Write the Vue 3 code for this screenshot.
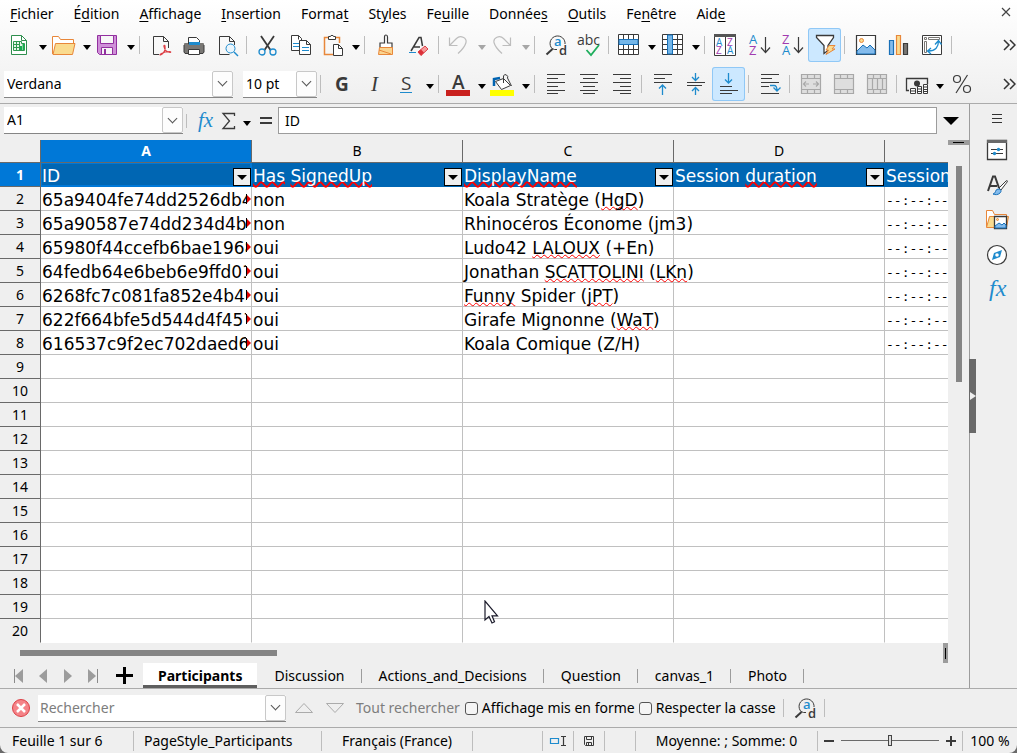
<script setup>
import { ref } from 'vue'

const menus = [
  ['', 'F', 'ichier'], ['É', 'd', 'ition'], ['', 'A', 'ffichage'], ['', 'I', 'nsertion'],
  ['Forma', 't', ''], ['St', 'y', 'les'], ['Fe', 'u', 'ille'], ['Donnée', 's', ''],
  ['', 'O', 'utils'], ['Fe', 'n', 'être'], ['Aid', 'e', '']
]

const standardBar = [
  { icon: 'new', label: 'Nouveau', split: true },
  { icon: 'open', label: 'Ouvrir', split: true },
  { icon: 'save', label: 'Enregistrer', split: true },
  { sep: true },
  { icon: 'pdf', label: 'Exporter au format PDF' },
  { icon: 'print', label: 'Imprimer' },
  { icon: 'preview', label: 'Aperçu' },
  { sep: true },
  { icon: 'cut', label: 'Couper' },
  { icon: 'copy', label: 'Copier' },
  { icon: 'paste', label: 'Coller', split: true },
  { sep: true },
  { icon: 'brush', label: 'Cloner le formatage' },
  { icon: 'clear', label: 'Effacer le formatage' },
  { sep: true },
  { icon: 'undo', label: 'Annuler', split: true, off: true },
  { icon: 'redo', label: 'Rétablir', split: true, off: true },
  { sep: true },
  { icon: 'find', label: 'Rechercher et remplacer' },
  { icon: 'spell', label: 'Orthographe' },
  { sep: true },
  { icon: 'rows', label: 'Ligne', split: true },
  { icon: 'cols', label: 'Colonne', split: true },
  { sep: true },
  { icon: 'sort', label: 'Trier' },
  { icon: 'az', label: 'Tri croissant' },
  { icon: 'za', label: 'Tri décroissant' },
  { icon: 'filter', label: 'AutoFiltre', on: true },
  { sep: true },
  { icon: 'image', label: 'Insérer une image' },
  { icon: 'chart', label: 'Insérer un diagramme' },
  { icon: 'pivot', label: 'Table dynamique' },
  { sep: true }
]

const formatBar = [
  { sep: true },
  { icon: 'bold', label: 'Gras' },
  { icon: 'italic', label: 'Italique' },
  { icon: 'underline', label: 'Souligner', split: true },
  { sep: true },
  { icon: 'fontcolor', label: 'Couleur de police', split: true },
  { icon: 'fill', label: "Couleur d'arrière-plan", split: true },
  { sep: true },
  { icon: 'left', label: 'Aligner à gauche' },
  { icon: 'center', label: 'Centrer' },
  { icon: 'right', label: 'Aligner à droite' },
  { sep: true },
  { icon: 'top', label: 'Aligner en haut' },
  { icon: 'middle', label: 'Centrer verticalement' },
  { icon: 'bottom', label: 'Aligner en bas', on: true },
  { sep: true },
  { icon: 'wrap', label: 'Renvoi à la ligne' },
  { sep: true },
  { icon: 'merge', label: 'Fusionner et centrer', off: true },
  { icon: 'mergecells', label: 'Fusionner', off: true },
  { icon: 'split', label: 'Scinder', off: true },
  { sep: true },
  { icon: 'currency', label: 'Format monétaire', split: true },
  { icon: 'percent', label: 'Format pourcentage' }
]

const columns = ['A', 'B', 'C', 'D', '']
const fields = ['ID', '~Has~ ~SignedUp~', '~DisplayName~', 'Session ~duration~', 'Session']
const people = [
  ['65a9404fe74dd2526db4', 'non', 'Koala Stratège (~HgD~)'],
  ['65a90587e74dd234d4b1', 'non', 'Rhinocéros Économe (jm3)'],
  ['65980f44ccefb6bae1968', 'oui', 'Ludo42 ~LALOUX~ (+En)'],
  ['64fedb64e6beb6e9ffd01', 'oui', 'Jonathan ~SCATTOLINI~ (~LKn~)'],
  ['6268fc7c081fa852e4b43', 'oui', '~Funny~ Spider (~jPT~)'],
  ['622f664bfe5d544d4f457', 'oui', 'Girafe Mignonne (~WaT~)'],
  ['616537c9f2ec702daed6', 'oui', 'Koala Comique (Z/H)']
]
const emptyRows = Array.from({ length: 12 }, (_, i) => i + 9)
const pieces = (text) => text.split('~')

const sheets = ['Participants', 'Discussion', 'Actions_and_Decisions', 'Question', 'canvas_1', 'Photo']
const panels = [
  { icon: 'properties', label: 'Propriétés' },
  { icon: 'styles', label: 'Styles' },
  { icon: 'gallery', label: 'Galerie' },
  { icon: 'navigator', label: 'Navigateur' },
  { icon: 'functions', label: 'Fonctions' }
]

const content = ref('ID')
const search = ref('')
const zoom = ref(50)
</script>

<template>
  <svg class="defs" width="0" height="0" aria-hidden="true">
    <defs>
      <symbol id="i-new" viewBox="0 0 24 24">
        <path d="M3.500 2.500h10l5 5v14h-15z" fill="#fff" stroke="#2f8f4e" /><path d="M13.500 2.500v5h5" fill="none" stroke="#2f8f4e" />
        <path d="M5.500 8.500h8v2h3v7h-11zM5.500 11.500h6M5.500 14.500h6M8.500 8.500v9M11.500 8.500v9" fill="#e6f5ea" stroke="#2f9a50" /><path d="M12 17v-4h2v4zM14.500 17v-6h2v6z" fill="#18ab50" />
      </symbol>
      <symbol id="i-open" viewBox="0 0 24 24">
        <path d="M.500 21V3.500h6l2 3h13v4" fill="#fff" stroke="#e8873a" /><path d="M1 21.500l2.500-11h19.500l-2.500 11z" fill="#fadb8f" stroke="#e8873a" />
      </symbol>
      <symbol id="i-save" viewBox="0 0 24 24">
        <path d="M1.500 2.500h19v19h-17l-2-2z" fill="#cf90d8" stroke="#92309f" /><path d="M4.500 2.500h13v8h-13z" fill="#f7f7f7" stroke="#92309f" /><path d="M5.500 21.500v-7h11v7z" fill="#f7f7f7" stroke="#92309f" /><path d="M8 16h2v5H8z" fill="#92309f" />
      </symbol>
      <symbol id="i-pdf" viewBox="0 0 24 24">
        <path d="M11 21.500H5.500v-18h10l5 5V15M15.500 3.500v5h5" fill="none" stroke="#3a3a3a" />
        <path d="M12.500 22c4-2 5-6 4.500-9 0-1-1.500-1-1 .5.500 3.500 3 5.500 6 6 1 0 1-1-.5-1-3 0-6 .8-8 2-1.500 1-2 1.500-1 1.500z" fill="none" stroke="#dc3f45" stroke-width="1.200" />
      </symbol>
      <symbol id="i-print" viewBox="0 0 24 24">
        <rect x="3" y="10" width="20" height="10" rx="1" fill="#797774" /><path d="M3 12v7l1 1.500h3M23 12v7l-1 1.500h-3" fill="none" stroke="#3a3a3a" />
        <path d="M7.500 11.500v-7h8l3 3v4" fill="#fff" stroke="#3a3a3a" /><path d="M8 9h11v3H8z" fill="#1e8bcd" /><path d="M7.500 16.500h11v5h-11z" fill="#fff" stroke="#3a3a3a" />
      </symbol>
      <symbol id="i-preview" viewBox="0 0 24 24">
        <path d="M20.500 12V8.500l-5-5h-10v18h10M15.500 3.500v5h5" fill="none" stroke="#3a3a3a" /><circle cx="16.500" cy="15.500" r="4.500" fill="#eaf5fc" stroke="#1e8bcd" /><path d="M20 19l4 4" stroke="#1e8bcd" stroke-width="1.500" />
      </symbol>
      <symbol id="i-cut" viewBox="0 0 24 24">
        <path d="M6 3l9.500 14M19 3L9.500 17" stroke="#3a3a3a" stroke-width="1.800" fill="none" /><circle cx="7" cy="19" r="3" fill="none" stroke="#1e8bcd" stroke-width="1.300" /><circle cx="18" cy="19" r="3" fill="none" stroke="#1e8bcd" stroke-width="1.300" />
      </symbol>
      <symbol id="i-copy" viewBox="0 0 24 24">
        <path d="M3.500 2.500h7l3 3v12h-10zM10.500 2.500v4" fill="#fff" stroke="#3a3a3a" /><path d="M5 10.500h6M5 13.500h6" stroke="#1e8bcd" />
        <path d="M11.500 7.500h7l4 4v10h-11zM18.500 7.500v4h4" fill="#fff" stroke="#3a3a3a" /><path d="M14 14.500h7M14 17.500h7" stroke="#1e8bcd" />
      </symbol>
      <symbol id="i-paste" viewBox="0 0 24 24">
        <path d="M8 4.500H3.500v17H12M15 4.500h3.500V10" fill="none" stroke="#e8873a" stroke-width="1.500" /><path d="M7.500 6.500v-3h2l.5-1h2l.5 1h2v3z" fill="#fff" stroke="#3a3a3a" /><path d="M12.500 11.500h5l4 4v7h-9zM17.500 11.500v4h4" fill="#fff" stroke="#3a3a3a" />
      </symbol>
      <symbol id="i-brush" viewBox="0 0 24 24">
        <path d="M11.500 10V4q0-2 1.500-2t1.500 2v6h4.500v4.500H7V10z" fill="#fff" stroke="#3a3a3a" stroke-width="1.200" /><path d="M6.500 14.500h13v7h-14z" fill="#fad490" stroke="#e8873a" /><path d="M6 17l12 4" stroke="#e8873a" />
      </symbol>
      <symbol id="i-clear" viewBox="0 0 24 24">
        <path d="M5 18L13 4.500h2L16.500 13M8 14h6" fill="none" stroke="#3a3a3a" stroke-width="1.500" /><path d="M3 19.500h7" stroke="#1e8bcd" />
        <path d="M12 19l7-6 3 3-7 6.500z" fill="#f79a9a" stroke="#dc3f45" /><path d="M12 19l3-2.500 3 3-3 3z" fill="#dc3038" />
      </symbol>
      <symbol id="i-undo" viewBox="0 0 24 24"><path d="M2.500 4.500v8h8M3 12l6.500-6.500c4-4 10.500-.5 9.500 4C18 13.500 15 17 11 20.500" fill="none" stroke="#bdbdbd" stroke-width="1.200" /></symbol>
      <symbol id="i-redo" viewBox="0 0 24 24"><path d="M19.500 4.500v8h-8M19 12l-6.500-6.500c-4-4-10.500-.5-9.500 4C4 13.500 7 17 11 20.500" fill="none" stroke="#bdbdbd" stroke-width="1.200" /></symbol>
      <symbol id="i-find" viewBox="0 0 24 24">
        <path d="M9 15.500A7.500 7.500 0 1 1 22 9.500V11" fill="none" stroke="#3a3a3a" /><path d="M3.500 21.500l6-5.500" stroke="#3a3a3a" stroke-width="2" /><path d="M9 15.500q2.500 1.500 5 1" fill="none" stroke="#3a3a3a" />
        <text x="11" y="13" class="glyph m" font-size="13" fill="#1e8bcd">a</text><text x="16" y="22" class="glyph m" font-size="13" fill="#3a3a3a">d</text>
      </symbol>
      <symbol id="i-spell" viewBox="0 0 24 24">
        <text x="1" y="12" class="glyph" font-size="14" fill="#3a3a3a">abc</text><path d="M10.500 17l4.500 5 8-10" fill="none" stroke="#1fae5d" stroke-width="1.800" />
      </symbol>
      <symbol id="i-rows" viewBox="0 0 24 24">
        <path d="M1.500 1.500h20v20h-20zM6.500 1.500v20M11.500 1.500v20M16.500 1.500v20M1.500 16.500h20" fill="#fff" stroke="#3a3a3a" /><path d="M2 6.500h19v5H2z" fill="#74b6e8" stroke="#1870b8" />
      </symbol>
      <symbol id="i-cols" viewBox="0 0 24 24">
        <path d="M1.500 1.500h20v20h-20zM1.500 6.500h20M1.500 11.500h20M1.500 16.500h20M16.500 1.500v20" fill="#fff" stroke="#3a3a3a" /><path d="M6.500 2v19h5V2z" fill="#74b6e8" stroke="#1870b8" />
      </symbol>
      <symbol id="i-sort" viewBox="0 0 24 24">
        <path d="M1.500 2.500h21v20h-21zM12.500 3v19" fill="#fff" stroke="#3a3a3a" /><path d="M1 1h22v3H1z" fill="#555" />
        <g class="glyph" font-size="10"><text x="3" y="13" fill="#1e8bcd">A</text><text x="14" y="13" fill="#a23bb0">Z</text><text x="3" y="21" fill="#a23bb0">Z</text><text x="14" y="21" fill="#1e8bcd">A</text></g>
      </symbol>
      <symbol id="i-az" viewBox="0 0 24 24">
        <g class="glyph" font-size="13"><text x="3" y="11" fill="#1e8bcd">A</text><text x="3" y="22" fill="#a23bb0">Z</text></g><path d="M19.500 4v15M15 14.500l4.500 5 4.500-5" fill="none" stroke="#3a3a3a" stroke-width="1.200" />
      </symbol>
      <symbol id="i-za" viewBox="0 0 24 24">
        <g class="glyph" font-size="13"><text x="3" y="11" fill="#a23bb0">Z</text><text x="3" y="22" fill="#1e8bcd">A</text></g><path d="M19.500 4v15M15 14.500l4.500 5 4.500-5" fill="none" stroke="#3a3a3a" stroke-width="1.200" />
      </symbol>
      <symbol id="i-filter" viewBox="0 0 24 24">
        <path d="M4.500 2.500h17v2l-5.500 8v5l-4 3v-8l-7.500-8z" fill="#fff" stroke="#3a3a3a" stroke-width="1.300" /><path d="M17 12.500h6l-3 3.500h3l-9 5.500 2.500-4.500h-2.500z" fill="#fadb8f" stroke="#e8873a" />
      </symbol>
      <symbol id="i-image" viewBox="0 0 24 24">
        <path d="M3.500 2.500h19v19h-19z" fill="#fff" stroke="#3a3a3a" stroke-width="1.200" /><circle cx="8.500" cy="7.500" r="2" fill="#fadb8f" stroke="#e8873a" /><path d="M4 21v-3l6-6 4 3 3-3 5 5v4z" fill="#83bbec" stroke="#1870b8" />
      </symbol>
      <symbol id="i-chart" viewBox="0 0 24 24">
        <path d="M3.500 7.500h4v14h-4z" fill="#83bbec" stroke="#1870b8" stroke-width="1.200" /><path d="M10.500 2.500h4v19h-4z" fill="#fadb8f" stroke="#e8873a" stroke-width="1.200" /><path d="M17.500 10.500h4v11h-4z" fill="#797774" stroke="#3a3a3a" stroke-width="1.200" />
      </symbol>
      <symbol id="i-pivot" viewBox="0 0 24 24">
        <path d="M3.500 2.500h19v19h-19z" fill="#fff" stroke="#3a3a3a" /><path d="M5.500 4.500h2v2h-2zM9.500 4.500h11v2h-11zM5.500 8.500h2v11h-2z" fill="#fff" stroke="#797774" /><path d="M19.500 8c0 6-3 10-10 10M16 11.500l3.500-4 3 4M12 15l-3.500 3 3.500 3" fill="none" stroke="#1e8bcd" stroke-width="1.300" />
      </symbol>
      <symbol id="i-bold" viewBox="0 0 24 24"><text x="6" y="19" class="glyph b" font-size="19" fill="#3a3a3a">G</text></symbol>
      <symbol id="i-italic" viewBox="0 0 24 24"><text x="9" y="19" class="serif" font-size="21" fill="#3a3a3a">I</text></symbol>
      <symbol id="i-underline" viewBox="0 0 24 24"><text x="6" y="18" class="glyph" font-size="19" fill="#3a3a3a">S</text><path d="M5 20.500h12" stroke="#1e8bcd" /></symbol>
      <symbol id="i-fontcolor" viewBox="0 0 24 24"><text x="5" y="17" class="glyph m" font-size="19" fill="#3a3a3a">A</text><path d="M-1 18h24v6H-1z" fill="#c9211e" /></symbol>
      <symbol id="i-fill" viewBox="0 0 24 24">
        <path d="M3 14V7l6-1" fill="none" stroke="#0063b1" stroke-width="2.500" /><path d="M4.500 9.500l8-3 7 7-9 4z" fill="#fff" stroke="#3a3a3a" /><path d="M12.500 11V4q1-2.500 3-1t1 3l4 8" fill="none" stroke="#3a3a3a" /><path d="M-1 18h24v6H-1z" fill="#ff0" />
      </symbol>
      <symbol id="i-left" viewBox="0 0 24 24"><path d="M4 2.500h18M4 6.500h11M4 10.500h18M4 14.500h11M4 18.500h18M4 21.500h11" class="ink" /></symbol>
      <symbol id="i-center" viewBox="0 0 24 24"><path d="M4 2.500h18M7 6.500h12M4 10.500h18M7 14.500h12M4 18.500h18M7 21.500h12" class="ink" /></symbol>
      <symbol id="i-right" viewBox="0 0 24 24"><path d="M4 2.500h18M11 6.500h11M4 10.500h18M11 14.500h11M4 18.500h18M11 21.500h11" class="ink" /></symbol>
      <symbol id="i-top" viewBox="0 0 24 24"><path d="M4 2.500h18M4 6.500h11M4 10.500h18" class="ink" /><path d="M12.500 23V13M9 16.500l3.500-3.500 3.500 3.500" class="blue" /></symbol>
      <symbol id="i-middle" viewBox="0 0 24 24"><path d="M4 10.500h18M4 13.500h15" class="ink" /><path d="M12.500 1v7M9 5l3.500 3.500L16 5M12.500 23v-7M9 19l3.500-3.500L16 19" class="blue" /></symbol>
      <symbol id="i-bottom" viewBox="0 0 24 24"><path d="M4 14.500h12M4 18.500h18M4 21.500h12" class="ink" /><path d="M12.500 1v10M9 7.500l3.500 3.500L16 7.500" class="blue" /></symbol>
      <symbol id="i-wrap" viewBox="0 0 24 24"><path d="M4 2.500h18M4 6.500h11M4 10.500h18M4 14.500h8M4 21.500h18" class="ink" /><path d="M13 13.500h4q3 0 3 5M16.500 15.500l3.500 3.500 3.500-3.500" class="blue" /></symbol>
      <symbol id="i-merge" viewBox="0 0 24 24"><path d="M3.500 2.500h19v19h-19zM3.500 6.500h19M3.500 17.500h19M9.500 2.500v4M16.500 2.500v4M9.500 17.500v4M16.500 17.500v4M5 12h6M15 12h6M8 9.500L5.500 12 8 14.500M18 9.500l2.500 2.500-2.500 2.500" class="faded" /></symbol>
      <symbol id="i-mergecells" viewBox="0 0 24 24"><path d="M3.500 2.500h19v19h-19zM3.500 6.500h19M3.500 17.500h19M9.500 2.500v4M16.500 2.500v4M9.500 17.500v4M16.500 17.500v4" class="faded" /></symbol>
      <symbol id="i-split" viewBox="0 0 24 24"><path d="M3.500 2.500h19v19h-19zM3.500 6.500h19M3.500 17.500h19M9.500 2.500v4M16.500 2.500v4M8.500 6.500v11M13.500 6.500v11M18.500 6.500v11M9.500 17.500v4M16.500 17.500v4" class="faded" /></symbol>
      <symbol id="i-currency" viewBox="0 0 24 24">
        <path d="M4 18.500H1.500v-12h21V12M1 6.500h22" fill="none" stroke="#3a3a3a" stroke-width="1.300" /><circle cx="12" cy="11.500" r="3" fill="#3a3a3a" />
        <path d="M5.500 16.500h5v5h-5zM12.500 14.500h4v7h-4zM18.500 12.500h4v9h-4zM5 19h6M12 17h5M12 19.500h5M18 15h5M18 17.500h5M18 19.500h5" fill="#fff" stroke="#3a3a3a" />
      </symbol>
      <symbol id="i-percent" viewBox="0 0 24 24"><circle cx="8" cy="7" r="3.500" class="ink" /><circle cx="18" cy="17" r="3.500" class="ink" /><path d="M18.500 3L7 21" class="ink" /></symbol>
      <symbol id="i-properties" viewBox="0 0 24 24"><path d="M2.500 2.500h19v19h-19z" fill="#fff" stroke="#3a3a3a" stroke-width="1.300" /><path d="M2 2h20v3H2z" fill="#696969" /><path d="M6 11.500h12M6 15.500h12" stroke="#3a3a3a" /><circle cx="13.500" cy="11.500" r="1.700" fill="#1e8bcd" /><circle cx="9.500" cy="15.500" r="1.700" fill="#1e8bcd" /></symbol>
      <symbol id="i-styles" viewBox="0 0 24 24">
        <path d="M3 18L8 3.500h2L14 15M5 13h7" fill="none" stroke="#3a3a3a" stroke-width="2" /><path d="M14 15l7-7q1.500-1 1.500.500L16 17z" fill="#fff" stroke="#3a3a3a" /><path d="M8 21c3 0 2-5 5-5s4 2 2 4-5 2-7 1z" fill="#83bbec" stroke="#1870b8" />
      </symbol>
      <symbol id="i-gallery" viewBox="0 0 24 24">
        <path d="M1.500 19V2.500h6l2 4h12v2" fill="#fff" stroke="#e8873a" /><path d="M1.500 19.500l3-11h19l-2 11z" fill="#fadb8f" stroke="#e8873a" /><path d="M9.500 8.500h12v12h-12z" fill="#fff" stroke="#3a3a3a" stroke-width="1.300" /><circle cx="12.500" cy="11.500" r="1" fill="#fadb8f" stroke="#e8873a" /><path d="M10 20v-2l4-3 3 2 2-2 2 2v3z" fill="#83bbec" stroke="#1870b8" />
      </symbol>
      <symbol id="i-navigator" viewBox="0 0 24 24"><circle cx="12" cy="12" r="9.500" fill="#fff" stroke="#3a3a3a" stroke-width="1.200" /><path d="M17 7l-2 7-8 3 2-7z" fill="#1e8bcd" /><circle cx="12" cy="12" r="1.800" fill="#fff" /></symbol>
      <symbol id="i-functions" viewBox="0 0 24 24"><text x="4" y="18" class="serif" font-size="24" fill="#1e8bcd">fx</text></symbol>
    </defs>
  </svg>

  <div class="app">
    <header class="chrome">
      <nav class="menu">
        <button v-for="m in menus" :key="m.join('')" class="menu-item">{{ m[0] }}<u>{{ m[1] }}</u>{{ m[2] }}</button>
        <button class="close" aria-label="Fermer le document">
          <svg width="10" height="10" viewBox="0 0 10 10"><path d="M1 1l8 8M9 1L1 9" stroke="#444" stroke-width="1.200" /></svg>
        </button>
      </nav>
      <div class="toolbar">
        <template v-for="(t, i) in standardBar" :key="i">
          <span v-if="t.sep" class="sep"></span>
          <template v-else>
            <button class="tool" :class="{ on: t.on }" :aria-label="t.label"><svg class="icon"><use :href="'#i-' + t.icon" /></svg></button>
            <button v-if="t.split" class="drop" :class="{ off: t.off }" :aria-label="t.label + ' : options'"></button>
          </template>
        </template>
        <button class="more" aria-label="Plus de commandes"><svg width="14" height="12" viewBox="0 0 14 12"><path d="M2 1l5 5-5 5M8 1l5 5-5 5" fill="none" stroke="#333" stroke-width="1.500" /></svg></button>
      </div>
      <div class="toolbar">
        <span class="combo font-name">
          <select aria-label="Nom de police"><option>Verdana</option></select>
          <span class="chev"></span>
        </span>
        <span class="combo font-size">
          <select aria-label="Taille de police"><option>10 pt</option></select>
          <span class="chev"></span>
        </span>
        <template v-for="(t, i) in formatBar" :key="i">
          <span v-if="t.sep" class="sep"></span>
          <template v-else>
            <button class="tool" :class="{ on: t.on }" :aria-label="t.label"><svg class="icon"><use :href="'#i-' + t.icon" /></svg></button>
            <button v-if="t.split" class="drop" :class="{ off: t.off }" :aria-label="t.label + ' : options'"></button>
          </template>
        </template>
        <button class="more" aria-label="Plus de commandes"><svg width="14" height="12" viewBox="0 0 14 12"><path d="M2 1l5 5-5 5M8 1l5 5-5 5" fill="none" stroke="#333" stroke-width="1.500" /></svg></button>
      </div>
    </header>

    <div class="workspace">
      <main class="document">
        <div class="formula">
          <span class="combo name-box">
            <select aria-label="Zone de nom"><option>A1</option></select>
            <span class="chev"></span>
          </span>
          <span class="sep"></span>
          <button class="fx" aria-label="Assistant Fonctions"><svg width="24" height="24" viewBox="0 0 24 24"><text x="5" y="18" class="serif" font-size="21" fill="#1e8bcd">fx</text></svg></button>
          <button class="sigma" aria-label="Somme"><svg width="16" height="20" viewBox="0 0 16 20"><path d="M13.500 5V2.500H2L8.500 10 2 17.500h11.500V15" fill="none" stroke="#3a3a3a" stroke-width="1.300" /></svg></button>
          <button class="drop" aria-label="Choisir la fonction"></button>
          <button class="equal" aria-label="Formule"><svg width="14" height="10" viewBox="0 0 14 10"><path d="M1 2h12M1 7h12" stroke="#3a3a3a" stroke-width="2" /></svg></button>
          <input v-model="content" class="content" aria-label="Ligne de saisie" />
          <button class="expand" aria-label="Développer la barre de formule"></button>
        </div>

        <div class="sheet-area">
          <div class="sheet">
            <table>
              <colgroup><col class="c-num" /><col v-for="n in 4" :key="n" class="c-data" /><col /></colgroup>
              <thead>
                <tr>
                  <td class="corner"></td>
                  <th v-for="(c, i) in columns" :key="i" scope="col" :class="{ sel: i === 0 }">{{ c }}</th>
                </tr>
              </thead>
              <tbody>
                <tr class="fields">
                  <th scope="row" class="sel">1</th>
                  <td v-for="(f, i) in fields" :key="f" :class="{ cursor: i === 0 }">
                    <div class="field">
                      <span><span v-for="(p, k) in pieces(f)" :key="k" :class="{ typo: k % 2 }">{{ p }}</span></span>
                      <button v-if="i < 4" class="autofilter" :aria-label="'Filtrer la colonne ' + columns[i]"></button>
                    </div>
                  </td>
                </tr>
                <tr v-for="(p, r) in people" :key="p[0]">
                  <th scope="row">{{ r + 2 }}</th>
                  <td class="id"><div class="clipped"><span class="long">{{ p[0] }}</span><svg class="overflow-mark" width="5" height="10" viewBox="0 0 5 10"><path d="M.500 0v10" stroke="#000" /><path d="M1 1v8l4-4z" fill="#e00000" /></svg></div></td>
                  <td>{{ p[1] }}</td>
                  <td><span v-for="(s, k) in pieces(p[2])" :key="k" :class="{ typo: k % 2 }">{{ s }}</span></td>
                  <td></td>
                  <td class="time">--:--:--</td>
                </tr>
                <tr v-for="n in emptyRows" :key="n">
                  <th scope="row">{{ n }}</th>
                  <td v-for="c in 5" :key="c"></td>
                </tr>
              </tbody>
            </table>
          </div>
          <div class="vscroll"><div class="vsplit"></div><div class="vthumb"></div></div>
        </div>

        <div class="hscroll"><div class="hthumb"></div><div class="hsplit"></div></div>

        <div class="tabs">
          <button class="nav" aria-label="Première feuille"><svg width="16" height="16" viewBox="0 0 16 16"><path d="M3.500 1v14" stroke="#8a8a8a" /><path d="M12 1v14L4 8z" fill="#9c9c9c" /></svg></button>
          <button class="nav" aria-label="Feuille précédente"><svg width="16" height="16" viewBox="0 0 16 16"><path d="M11 1v14L3 8z" fill="#9c9c9c" /></svg></button>
          <button class="nav" aria-label="Feuille suivante"><svg width="16" height="16" viewBox="0 0 16 16"><path d="M3 1v14l8-7z" fill="#9c9c9c" /></svg></button>
          <button class="nav" aria-label="Dernière feuille"><svg width="16" height="16" viewBox="0 0 16 16"><path d="M11.500 1v14" stroke="#8a8a8a" /><path d="M2 1v14l8-7z" fill="#9c9c9c" /></svg></button>
          <button class="add" aria-label="Ajouter une feuille"><svg width="18" height="18" viewBox="0 0 18 18"><path d="M0 8.500h17M8.500 0v17" stroke="#000" stroke-width="3" /></svg></button>
          <button v-for="(s, i) in sheets" :key="s" class="tab" :class="{ active: i === 0 }">{{ s }}</button>
        </div>
      </main>

      <aside class="sidebar">
        <button class="panel-btn burger" aria-label="Paramètres du volet"><svg width="12" height="10" viewBox="0 0 12 10"><path d="M1 1.500h10M1 5.500h10M1 9.500h10" stroke="#333" /></svg></button>
        <button v-for="p in panels" :key="p.icon" class="panel-btn" :aria-label="p.label"><svg class="icon"><use :href="'#i-' + p.icon" /></svg></button>
        <button class="handle" aria-label="Afficher le volet latéral"><svg width="6" height="8" viewBox="0 0 6 8"><path d="M0 0v8l6-4z" fill="#efefef" /></svg></button>
      </aside>
    </div>

    <div class="findbar">
      <button class="stop" aria-label="Fermer la barre de recherche"><svg width="20" height="20" viewBox="0 0 20 20"><circle cx="10" cy="10" r="8.500" fill="#f48388" stroke="#dc3f45" /><path d="M6 6l8 8M14 6l-8 8" stroke="#fff" stroke-width="2.500" /></svg></button>
      <span class="combo search">
        <input v-model="search" type="text" placeholder="Rechercher" aria-label="Rechercher" />
        <button class="chev" aria-label="Historique"></button>
      </span>
      <button class="step" aria-label="Rechercher le précédent"><svg width="20" height="12" viewBox="0 0 20 12"><path d="M1.500 10.500h17L10 1.500z" fill="none" stroke="#ababab" /></svg></button>
      <button class="step" aria-label="Rechercher le suivant"><svg width="20" height="12" viewBox="0 0 20 12"><path d="M1.500 1.500h17L10 10.500z" fill="none" stroke="#ababab" /></svg></button>
      <button class="find-all" disabled>Tout rechercher</button>
      <label class="check"><input type="checkbox" />Affichage mis en forme</label>
      <label class="check"><input type="checkbox" />Respecter la casse</label>
      <span class="sep"></span>
      <button class="tool" aria-label="Rechercher et remplacer"><svg class="icon"><use href="#i-find" /></svg></button>
      <span class="sep"></span>
    </div>

    <footer class="status">
      <span class="cell page">Feuille 1 sur 6</span>
      <span class="cell style">PageStyle_Participants</span>
      <span class="cell lang">Français (France)</span>
      <span class="cell blank"></span>
      <span class="cell small"><svg width="18" height="14" viewBox="0 0 18 14"><path d="M1.500 4.500h8v5h-8z" fill="none" stroke="#1e8bcd" stroke-width="1.200" /><path d="M12 2.500h5M12 11.500h5M14.500 2.500v9" stroke="#3a3a3a" stroke-width="1.200" /></svg></span>
      <span class="cell small"><svg width="12" height="12" viewBox="0 0 12 12"><path d="M1.500 1.500h9v9h-8l-1-1zM3.500 1.500v3h5v-3M3.500 10.500v-3h5v3M5.500 8v2" fill="none" stroke="#3a3a3a" /></svg></span>
      <span class="cell small"></span>
      <span class="cell sum">Moyenne: ; Somme: 0</span>
      <span class="cell zoom">
        <button aria-label="Zoom arrière"><svg width="12" height="12" viewBox="0 0 12 12"><path d="M1 6h10" stroke="#3a3a3a" stroke-width="2" /></svg></button>
        <input v-model="zoom" type="range" min="0" max="100" aria-label="Facteur de zoom" />
        <button aria-label="Zoom avant"><svg width="12" height="12" viewBox="0 0 12 12"><path d="M1 6h10M6 1v10" stroke="#3a3a3a" stroke-width="2" /></svg></button>
      </span>
      <span class="cell percent">100 %</span>
    </footer>

    <svg class="pointer" width="16" height="25" viewBox="0 0 16 25" aria-hidden="true"><path d="M1 1v19l4-3.500 3 6.500 2.500-1.200-2.500-6h5.500z" fill="#fff" stroke="#1b1b2b" stroke-width="1.200" /></svg>
  </div>
</template>

<style>
html { background: #6a6a6a; }
body { margin: 0; }
</style>

<style scoped>
.defs { position: absolute; }
.glyph { font-family: "Open Sans", "Noto Sans", sans-serif; }
.b { font-weight: 700; }
.m { font-weight: 600; }
.serif { font-family: "Liberation Serif", serif; font-style: italic; }
.ink { fill: none; stroke: #3a3a3a; stroke-width: 1.2; }
.blue { fill: none; stroke: #1e8bcd; stroke-width: 1.3; }
.faded { fill: #dedede; stroke: #a8a8a8; stroke-width: 1.2; }

.app {
  position: relative;
  display: flex;
  flex-direction: column;
  min-height: 100vh;
  overflow: hidden;
  border-radius: 0 0 8px 8px;
  background: #efefef;
  color: #000;
  font: 14px/20px "Noto Sans", "Open Sans", sans-serif;
}
button, select, input { font: inherit; color: inherit; }
button {
  display: flex;
  align-items: center;
  justify-content: center;
  padding: 0;
  border: 0;
  background: none;
  white-space: nowrap;
}
.icon { width: 24px; height: 24px; flex: none; overflow: visible; }
.icon use, symbol { overflow: visible; }

.chrome { background: linear-gradient(#fff, #efefef); border-bottom: 1px solid #ababab; padding-bottom: 2px; }
.menu { display: flex; height: 28px; }
.menu-item { padding: 0 10px; display: block; }
.menu-item u { text-underline-offset: 2px; }
.close { margin-left: auto; padding: 0 6px; height: 24px; }
.toolbar { display: flex; align-items: center; height: 34px; padding: 0 1px 0 4px; }
.toolbar + .toolbar { margin-top: 5px; }
.tool {
  flex: none;
  width: 33px;
  height: 34px;
  justify-content: flex-start;
  padding-left: 4px;
}
.tool.on { background: #cce8ff; box-shadow: inset 0 0 0 1px #90c8f6; border-radius: 3px; }
.drop { flex: none; width: 11px; height: 34px; }
.drop::after {
  content: "";
  border: 4px solid transparent;
  border-top: 5px solid #000;
  border-bottom: 0;
  margin-top: 5px;
}
.drop.off::after { border-top-color: #a6a6a6; }
.sep { flex: none; width: 8px; height: 18px; background: linear-gradient(90deg, transparent 3px, #bdbdbd 3px, #bdbdbd 4px, transparent 4px); }
.more { margin-left: auto; flex: none; width: 14px; }

.combo { display: grid; flex: none; height: 27px; background: #fff; border-bottom: 1px solid #858585; box-sizing: border-box; }
.combo select, .combo input {
  grid-area: 1 / 1;
  appearance: none;
  width: 100%;
  min-width: 0;
  box-sizing: border-box;
  border: 0;
  border-radius: 0;
  padding: 0 24px 0 3px;
  background: none;
  outline: 0;
}
.combo input { padding-left: 2px; }
.combo input::placeholder { color: #7d7d7d; opacity: 1; }
.chev {
  grid-area: 1 / 1;
  justify-self: end;
  width: 21px;
  box-sizing: border-box;
  border: 1px solid #c8c8c8;
  border-radius: 2px;
  background: #fdfdfd;
  display: flex;
  align-items: center;
  justify-content: center;
  pointer-events: none;
}
.chev::after {
  content: "";
  width: 6px;
  height: 6px;
  border: solid #555;
  border-width: 0 1px 1px 0;
  transform: rotate(45deg);
  margin-bottom: 4px;
}
.font-name { width: 229px; margin-right: 10px; }
.font-size { width: 74px; }

.workspace { display: flex; flex: 1; border-bottom: 1px solid #ababab; }
.document { flex: 1; min-width: 0; }
.formula { display: flex; align-items: center; height: 27px; padding: 3px 10px 6px 4px; }
.name-box { width: 179px; }
.formula .sep { width: 10px; height: 14px; }
.fx { width: 24px; justify-content: flex-start; }
.sigma { width: 23px; }
.formula .drop { width: 14px; height: 27px; }
.equal { width: 24px; }
.content {
  flex: 1;
  min-width: 0;
  height: 27px;
  box-sizing: border-box;
  border: 1px solid #9c9c9c;
  border-radius: 0;
  padding: 0 6px;
  background: #fff;
}
.expand { width: 22px; justify-content: flex-end; }
.expand::after { content: ""; border: 8px solid transparent; border-top-color: #000; border-bottom: 0; }

.sheet-area { display: flex; }
.sheet { flex: 1; min-width: 0; overflow: hidden; background: #fff; }
table { table-layout: fixed; width: 100%; border-spacing: 0; }
.c-num { width: 41px; }
.c-data { width: 211px; }
th, td { box-sizing: border-box; height: 24px; padding: 0; white-space: nowrap; }
th { background: #efefef; font-weight: 400; line-height: 23px; border-right: 1px solid #696969; border-bottom: 1px solid #696969; }
thead th, .corner { height: 23px; line-height: 22px; }
.corner { background: #efefef; border-bottom: 1px solid #696969; border-right: 1px solid #696969; }
th.sel { background: #0078d7; color: #fff; font-weight: 700; }
thead th:last-child { border-right: 0; }
tbody td {
  border-right: 1px solid #c0c0c0;
  border-bottom: 1px solid #c0c0c0;
  padding: 4px 0 0 1px;
  font-family: "DejaVu Sans", sans-serif;
  font-size: 17px;
  line-height: 19px;
}
tbody td:last-child { border-right: 0; }
tbody tr:last-child > * { border-bottom-color: transparent; }
tbody .time { font-family: "DejaVu Sans Mono", monospace; font-size: 13px; }
.fields td { background: #0066b3; color: #fff; border-color: #0066b3; }
.fields td, .id { padding-top: 0; }
.fields .cursor { box-shadow: inset 0 0 0 1px #0078d7; border-color: #0078d7; }
.field { display: flex; justify-content: space-between; align-items: flex-end; height: 23px; }
.autofilter { width: 18px; height: 18px; flex: none; background: #efefef; border: 1px solid #000; }
.autofilter::after { content: ""; border: 5px solid transparent; border-top-color: #000; border-bottom: 0; }
.typo { text-decoration: underline wavy #f00 1px; text-underline-offset: 0; text-decoration-skip-ink: none; }
.field .typo { text-decoration-thickness: 2px; text-underline-offset: -1px; }
.clipped { display: flex; align-items: flex-end; height: 23px; }
.long { flex: 1; min-width: 0; overflow: hidden; }
.overflow-mark { flex: none; align-self: center; }

.vscroll { flex: none; width: 21px; }
.vsplit { height: 5px; background: linear-gradient(#000, #000) center / 11px 1px no-repeat #9c9c9c; margin-bottom: 21px; }
.vthumb { width: 6px; height: 43%; margin-left: 8px; background: #858585; }
.hscroll { display: flex; align-items: center; height: 20px; padding: 0 21px 0 20px; }
.hthumb { width: 257px; height: 6px; background: #858585; }
.hsplit { margin-left: auto; width: 5px; height: 20px; background: linear-gradient(#000, #000) center / 1px 11px no-repeat #9c9c9c; }

.tabs { display: flex; align-items: center; height: 25px; padding-left: 6px; }
.nav { width: 25px; height: 25px; }
.add { width: 37px; height: 25px; }
.tab { height: 25px; padding: 0 17px; background: linear-gradient(#9c9c9c, #9c9c9c) right center / 1px 14px no-repeat; }
.tab.active { padding: 0 15px; background: #fff; font-weight: 700; box-shadow: inset 0 -3px #5f5f5f; }

.sidebar { position: relative; flex: none; width: 47px; border-left: 1px solid #9c9c9c; }
.panel-btn { width: 100%; height: 35px; padding-left: 7px; }
.burger { height: 28px; }
.handle { position: absolute; left: -1px; top: 50%; transform: translateY(-50%); width: 7px; height: 74px; background: #696969; }

.findbar { display: flex; align-items: center; height: 38px; padding-left: 11px; border-bottom: 1px solid #ababab; }
.search { width: 248px; margin: 0 8px 0 7px; }
.stop { width: 20px; }
.step { width: 20px; margin-right: 11px; }
.find-all { color: #7d7d7d; margin-right: 5px; }
.check { display: flex; align-items: center; gap: 4px; margin-right: 4px; white-space: nowrap; }
.check input { appearance: none; box-sizing: border-box; width: 13px; height: 13px; margin: 0; border: 1px solid #555; border-radius: 3px; background: #f5f5f5; }

.status { display: flex; align-items: center; height: 25px; }
.cell { box-sizing: border-box; height: 20px; border-right: 1px solid #bdbdbd; display: flex; align-items: center; justify-content: center; white-space: nowrap; flex: none; }
.page { width: 134px; justify-content: flex-start; padding-left: 12px; }
.style { width: 188px; justify-content: flex-start; padding-left: 10px; }
.lang { width: 151px; }
.blank { width: 70px; }
.small { width: 31px; }
.sum { flex: 1; }
.zoom { width: 145px; gap: 6px; }
.percent { width: 54px; border-right: 0; }
.zoom input { appearance: none; width: 98px; height: 12px; margin: 0; background: linear-gradient(#6a6a6a, #6a6a6a) center / 100% 1px no-repeat; }
.zoom input::-webkit-slider-thumb { appearance: none; width: 4px; height: 11px; background: #ddd; border: 1px solid #444; box-sizing: border-box; }

.pointer { position: absolute; left: 484px; top: 600px; }
</style>
